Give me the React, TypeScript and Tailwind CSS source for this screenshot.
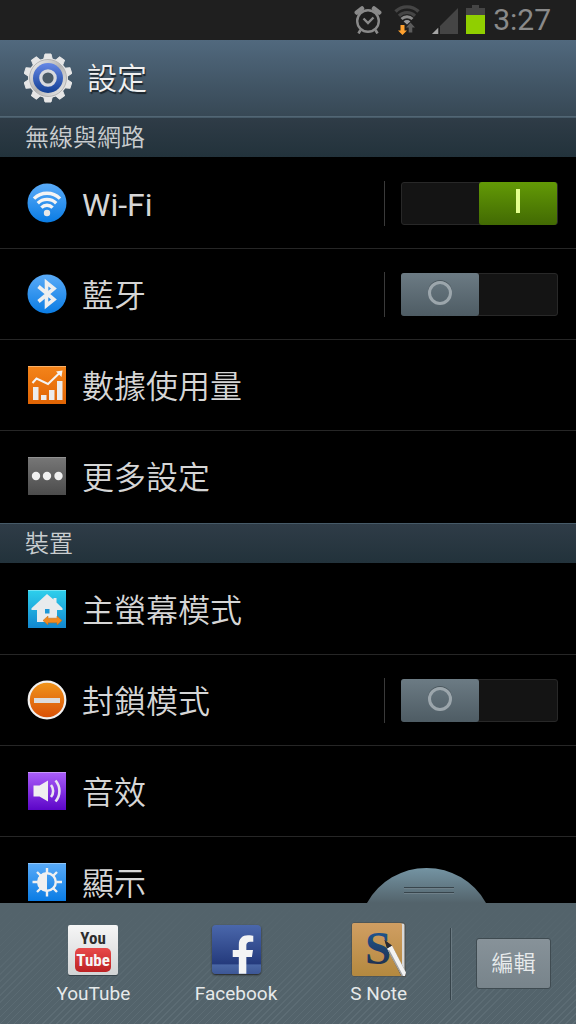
import React, { useState } from 'react';
import clsx from 'clsx';
import { FaFacebookF } from 'react-icons/fa';

const StatusBar: React.FC = () => (
  <div className="flex h-10 flex-shrink-0 items-center justify-end bg-[#1f1f1f] pr-[25px] text-[#8a8a8a]">
    <svg width="28" height="28" viewBox="0 0 28 28" fill="none" stroke="#8a8a8a" aria-hidden="true">
      <circle cx="14" cy="15" r="10.8" strokeWidth="2.4" />
      <path d="M9.5 12.5l4.5 4.5 5.5-5.5" strokeWidth="2.4" />
      <path d="M6.5 24l-2 3.5M21.5 24l2 3.5" strokeWidth="2.6" />
      <path d="M2.8 6.5L8 2.5M25.2 6.5L20 2.5" strokeWidth="4.5" strokeLinecap="round" />
    </svg>
    <svg className="ml-3" width="26" height="30" viewBox="0 0 26 30" fill="none" aria-hidden="true">
      <path d="M1.5 6.5a16.5 16.5 0 0 1 23 0" stroke="#454545" strokeWidth="3.4" />
      <path d="M5 10.8a11.4 11.4 0 0 1 16 0" stroke="#454545" strokeWidth="3.2" />
      <path d="M7.5 14a7.8 7.8 0 0 1 11 0" stroke="#8a8a8a" strokeWidth="2.8" />
      <path d="M9.6 16.4a4.8 4.8 0 0 1 6.8 0L13 19.6z" fill="#9a9a9a" />
      <path d="M16.5 17.5l4.5 5h-2.7v5h-3.6v-5H12z" fill="#5c5c5c" />
      <path d="M6.5 20h4v5.5h2.5L8.5 30 4 25.5h2.5z" fill="#ffa12f" />
    </svg>
    <svg className="ml-3" width="26" height="28" viewBox="0 0 26 28" aria-hidden="true">
      <path d="M0 28L26 2v26z" fill="#454545" />
      <path d="M0 28l6.5-6.5V28z" fill="#a5a5a5" />
      <path d="M6.5 20.5h1.3V28H6.5z" fill="#111" />
    </svg>
    <svg className="ml-2" width="19" height="30" viewBox="0 0 19 30" aria-hidden="true">
      <path d="M6 0h7v3h6v7H0V3h6z" fill="#454545" />
      <rect y="10" width="19" height="19" fill="#90cf00" />
    </svg>
    <span className="ml-2 text-[30px] leading-10 font-normal">3:27</span>
  </div>
);

const teeth = [0, 36, 72, 108, 144, 180, 216, 252, 288, 324];

const GearIcon: React.FC = () => (
  <svg width="48" height="50" viewBox="-24 -25 48 50" aria-hidden="true">
    <defs>
      <linearGradient id="gearMetal" x1="0" y1="0" x2="1" y2="1">
        <stop offset="0" stopColor="#f6f6f6" />
        <stop offset="0.5" stopColor="#b4b4b4" />
        <stop offset="1" stopColor="#f0f0f0" />
      </linearGradient>
      <linearGradient id="gearBlue" x1="0" y1="0" x2="0" y2="1">
        <stop offset="0" stopColor="#6688e6" />
        <stop offset="1" stopColor="#123f94" />
      </linearGradient>
    </defs>
    {teeth.map((deg) => (
      <path
        key={deg}
        d="M-4.5 -18L-3 -24H3L4.5 -18z"
        fill="#e6e6e6"
        stroke="#e6e6e6"
        strokeLinejoin="round"
        transform={`rotate(${deg})`}
      />
    ))}
    <circle r="20" fill="#e6e6e6" />
    <circle r="18.5" fill="url(#gearMetal)" stroke="#a8a8a8" strokeWidth="0.8" />
    <circle r="15" fill="url(#gearBlue)" />
    <circle r="7.2" fill="#4a5a66" stroke="#d8dade" strokeWidth="3.2" />
  </svg>
);

const Gradient: React.FC<{ id: string; from: string; to: string }> = ({ id, from, to }) => (
  <defs>
    <linearGradient id={id} x1="0" y1="0" x2="0" y2="1">
      <stop offset="0" stopColor={from} />
      <stop offset="1" stopColor={to} />
    </linearGradient>
  </defs>
);

const RowIcon: React.FC<{ children: React.ReactNode }> = ({ children }) => (
  <svg className="flex-shrink-0" width="40" height="40" viewBox="0 0 40 40" aria-hidden="true">{children}</svg>
);

const WifiIcon = () => (
  <RowIcon>
    <Gradient id="wifi" from="#5aabf8" to="#0a7ce4" />
    <circle cx="20" cy="20" r="19.5" fill="url(#wifi)" />
    <g fill="none" stroke="#f4f4f4" strokeWidth="3.4">
      <path d="M7 15.6a18.4 18.4 0 0 1 26 0" />
      <path d="M10.8 20.2a13 13 0 0 1 18.4 0" />
      <path d="M14.4 24.6a8 8 0 0 1 11.2 0" />
    </g>
    <circle cx="20" cy="30" r="3.2" fill="#e8e8e8" />
  </RowIcon>
);

const BluetoothIcon = () => (
  <RowIcon>
    <Gradient id="bt" from="#5aabf8" to="#0a7ce4" />
    <circle cx="20" cy="20" r="19.5" fill="url(#bt)" />
    <path d="M11.5 12.5L27 25.5 19.5 31.5V8.5l7.5 6L11.5 27.5" fill="none" stroke="#efefef" strokeWidth="3.6" />
  </RowIcon>
);

const DataIcon = () => (
  <RowIcon>
    <Gradient id="data" from="#f4841a" to="#e06404" />
    <rect x="1" y="1" width="38" height="38" fill="url(#data)" />
    <path d="M1 1.5h38" stroke="#fbb066" />
    <path d="M5.5 18l4-4.5L21 19 33 7.5" fill="none" stroke="#f4f4f4" strokeWidth="2" />
    <path d="M29 6.5l6.5-1L34.5 12z" fill="#f4f4f4" />
    <path d="M6 22h5.5v13H6zM14 30h5.5v5H14zM22 25h5.5v10H22zM30 16h5.5v19H30z" fill="#ececec" />
  </RowIcon>
);

const MoreIcon = () => (
  <RowIcon>
    <Gradient id="more" from="#777777" to="#4c4c4c" />
    <rect x="1" y="1" width="38" height="38" fill="url(#more)" />
    <path d="M1 1.5h38" stroke="#929292" />
    <circle cx="9" cy="20" r="4.2" fill="#f0f0f0" />
    <circle cx="20" cy="20" r="4.2" fill="#f0f0f0" />
    <circle cx="31.5" cy="20" r="4.2" fill="#f0f0f0" />
  </RowIcon>
);

const HomeIcon = () => (
  <RowIcon>
    <Gradient id="home" from="#2ed0ec" to="#1287cf" />
    <rect x="1" y="1" width="38" height="38" fill="url(#home)" />
    <path d="M1 1.5h38" stroke="#6ee2f4" />
    <path d="M20 5l6.500 5.500V9H29.500v4.500l6 5.700V21H30v12H10V21H4.500v-1.800z" fill="#e8ebed" />
    <rect x="18" y="20" width="4.5" height="4.5" fill="#1d98d8" />
    <path d="M16 31.5l5-4.5v2.2h9V27l5 4.5-5 4.5v-2.2h-9V36z" fill="#f18a20" stroke="#c06a14" strokeWidth="0.5" />
  </RowIcon>
);

const BlockIcon = () => (
  <RowIcon>
    <Gradient id="block" from="#f0961c" to="#d94f06" />
    <circle cx="20" cy="20" r="18.3" fill="url(#block)" stroke="#f0f0f0" strokeWidth="2.2" />
    <rect x="7" y="18" width="26" height="5" fill="#dcdcdc" />
  </RowIcon>
);

const SoundIcon = () => (
  <RowIcon>
    <Gradient id="sound" from="#ab5ffa" to="#5c05c8" />
    <rect x="1" y="1" width="38" height="38" fill="url(#sound)" />
    <path d="M1 1.5h38" stroke="#c796fb" />
    <path d="M6.5 14.5h6L21 9.5v21l-8.5-5h-6z" fill="#f0f0f0" />
    <path d="M24 14a9.5 9.5 0 0 1 0 12M28.5 9.5a16 16 0 0 1 0 21" fill="none" stroke="#e8e4f0" strokeWidth="2.6" />
  </RowIcon>
);

const DisplayIcon = () => (
  <RowIcon>
    <Gradient id="display" from="#5aabf8" to="#0a7ce4" />
    <rect x="1" y="1" width="38" height="38" fill="url(#display)" />
    <path d="M1 1.5h38" stroke="#8fc6fa" />
    <g stroke="#f0f0f0" strokeWidth="2.4">
      <path d="M20 6v5M20 29v5.5M5.5 20h5M29.5 20H35M10 10l3.5 3.5M30 10l-3.5 3.5M10 30l3.5-3.5M30 30l-3.5-3.5" />
      <circle cx="20" cy="20" r="8.8" fill="none" />
    </g>
    <path d="M20 10.5a9.5 9.5 0 0 0 0 19z" fill="#f0f0f0" />
  </RowIcon>
);

interface ToggleProps {
  label: string;
  on: boolean;
  onChange: (on: boolean) => void;
}

const Toggle: React.FC<ToggleProps> = ({ label, on, onChange }) => (
  <div className="flex items-center gap-4">
    <span className="h-[45px] w-px bg-[#3a3a3a]" />
    <label className="relative flex h-[43px] w-[157px] cursor-pointer rounded-[3px] border border-[#282828] bg-[#141414]">
      <input
        type="checkbox"
        role="switch"
        aria-label={label}
        checked={on}
        onChange={(e) => onChange(e.target.checked)}
        className="sr-only"
      />
      <span
        className={clsx(
          '-my-px flex w-[78px] items-center justify-center rounded-[3px] bg-linear-to-b',
          on ? 'ml-auto from-[#639a06] to-[#426a03]' : '-ml-px from-[#6c7b84] to-[#4e5c64]'
        )}
      >
        {on ? (
          <span className="mb-1 h-6 w-1 bg-[#e4ff8e]" />
        ) : (
          <span className="mb-0.5 size-6 rounded-full border-[3px] border-[#9ca6ac] shadow-[0_-1px_0_#4c585f]" />
        )}
      </span>
    </label>
  </div>
);

interface Setting {
  id: string;
  label: string;
  icon: React.FC;
  toggle?: boolean;
  latin?: boolean;
}

const network: Setting[] = [
  { id: 'wifi', label: 'Wi-Fi', icon: WifiIcon, toggle: true, latin: true },
  { id: 'bluetooth', label: '藍牙', icon: BluetoothIcon, toggle: true },
  { id: 'data', label: '數據使用量', icon: DataIcon },
  { id: 'more', label: '更多設定', icon: MoreIcon },
];

const device: Setting[] = [
  { id: 'home', label: '主螢幕模式', icon: HomeIcon },
  { id: 'blocking', label: '封鎖模式', icon: BlockIcon, toggle: true },
  { id: 'sound', label: '音效', icon: SoundIcon },
  { id: 'display', label: '顯示', icon: DisplayIcon },
];

interface SectionProps {
  title: string;
  items: Setting[];
  enabled: Record<string, boolean>;
  onToggle: (id: string, on: boolean) => void;
}

const Section: React.FC<SectionProps> = ({ title, items, enabled, onToggle }) => (
  <section>
    <h2 className="h-10 border-t border-[#465a68] bg-linear-to-b from-[#2f3c47] to-[#22323b] px-[25px] text-2xl leading-10 font-[350] text-[#c9cdcf]">
      {title}
    </h2>
    <ul className="py-px">
      {items.map(({ id, label, icon: Icon, toggle, latin }) => (
        <li
          key={id}
          className="flex h-[91px] items-center border-b border-[#262626] pr-[18px] pl-[27px] last:border-transparent"
        >
          <button type="button" className="flex flex-1 items-center gap-[15px] text-left text-[32px] leading-10">
            <Icon />
            <span className={clsx('pt-1', latin ? 'font-normal' : 'font-[350]')}>{label}</span>
          </button>
          {toggle && <Toggle label={label} on={enabled[id]} onChange={(on) => onToggle(id, on)} />}
        </li>
      ))}
    </ul>
  </section>
);

const YouTubeLogo = () => (
  <svg width="52" height="52" viewBox="0 0 52 52" aria-hidden="true">
    <Gradient id="ytPaper" from="#f6f6f6" to="#d2d4d5" />
    <Gradient id="ytRed" from="#e84a4a" to="#bd2224" />
    <rect x="1" y="2" width="50" height="50" rx="2" fill="#37444b" />
    <rect x="1" y="1" width="50" height="50" rx="2" fill="url(#ytPaper)" />
    <rect x="8" y="24" width="36" height="24" rx="5" fill="url(#ytRed)" />
    <g textAnchor="middle" fontWeight="700" className="font-['Roboto_Condensed','Liberation_Sans_Narrow',Roboto,sans-serif]">
      <text x="26" y="20" fontSize="17" fill="#2e2e2e">You</text>
      <text x="26" y="42" fontSize="17" fill="#f6f6f6">Tube</text>
    </g>
  </svg>
);

const FacebookLogo = () => (
  <span className="flex h-[49px] w-[49px] items-end justify-end overflow-hidden rounded-[4px] bg-[linear-gradient(#4a67ab,#243a7c_80%,#4a67a5_81%,#3d5796)] pr-1.5 shadow-[0_1px_2px_#222]">
    <FaFacebookF className="h-[39px] w-6 text-[#f4f4f4]" />
  </span>
);

const NoteLogo = () => (
  <svg width="56" height="56" viewBox="0 0 56 56" aria-hidden="true">
    <Gradient id="noteCover" from="#d09e62" to="#b4893f" />
    <Gradient id="noteInk" from="#1d5fa0" to="#20283f" />
    <rect x="1" y="1" width="53" height="53" rx="2" fill="#d9d9d9" stroke="#4a4a44" />
    <rect x="1" y="1" width="50" height="53" rx="2" fill="url(#noteCover)" />
    <text x="27" y="42" fontSize="47" fontWeight="700" textAnchor="middle" fill="url(#noteInk)" className="font-['Liberation_Serif',serif]">
      S
    </text>
    <path d="M33.5 18l3 9 14 27.500h4.500v-4L41 24z" fill="#4a4640" />
    <path d="M36 26.500l5-3L55 50.500l-1 3.500h-3z" fill="#f2f2f2" />
    <path d="M37.500 28l14 26" stroke="#a0a0a0" strokeWidth="1.5" />
    <path d="M33.5 18l2.500 8.500 5-3z" fill="#2a2c33" />
  </svg>
);

const apps = [
  { name: 'YouTube', logo: YouTubeLogo },
  { name: 'Facebook', logo: FacebookLogo },
  { name: 'S Note', logo: NoteLogo },
];

const Tray: React.FC = () => (
  <footer className="relative flex h-[121px] flex-shrink-0 items-center bg-[#53636b] bg-[linear-gradient(#53636b,transparent),repeating-linear-gradient(135deg,#5d6d75_0_1px,transparent_1px_5px)] pr-[25px] pl-[22px]">
    {/* pull handle, overlaps the list */}
    <svg className="absolute right-[89px] bottom-full" width="121" height="36" viewBox="0 0 121 36" aria-hidden="true">
      <Gradient id="handle" from="#7494a3" to="#53636b" />
      <path d="M1 36A68 68 0 0 1 120 36z" fill="url(#handle)" />
      <path d="M38 20.5h50M38 25.5h50" stroke="#38454c" />
      <path d="M38 21.5h50M38 26.5h50" stroke="#6f8089" />
    </svg>
    <ul className="flex flex-1">
      {apps.map(({ name, logo: Logo }) => (
        <li key={name} className="flex-1">
          <button type="button" className="flex w-full flex-col items-center gap-1 text-[19px] leading-6 text-[#e6e9ea]">
            <span className="flex h-14 items-center">
              <Logo />
            </span>
            {name}
          </button>
        </li>
      ))}
    </ul>
    <span className="h-[72px] w-0.5 border-r border-[#6b7a82] bg-[#36434a]" />
    <button
      type="button"
      className="ml-6 h-[51px] w-[75px] rounded-[3px] border border-[#3f4b51] bg-linear-to-b from-[#879299] to-[#78848b] text-[22px] font-[350] text-[#e8ebec]"
    >
      編輯
    </button>
  </footer>
);

export default function App() {
  const [enabled, setEnabled] = useState<Record<string, boolean>>({
    wifi: true,
    bluetooth: false,
    blocking: false,
  });

  const handleToggle = (id: string, on: boolean) => {
    setEnabled((prev) => ({ ...prev, [id]: on }));
  };

  return (
    <div className="flex h-screen flex-col bg-black font-[Roboto,'Noto_Sans_CJK_TC',sans-serif] text-[#d6d6d6]">
      <StatusBar />
      <header className="flex h-[77px] flex-shrink-0 items-center gap-[15px] border-b border-[#526674] bg-linear-to-b from-[#51697e] to-[#374855] px-6">
        <GearIcon />
        <h1 className="pt-0.5 text-[30px] leading-10 font-[350] text-[#f0f0f0] [text-shadow:1px_2px_1px_#1c252c]">設定</h1>
      </header>
      <main className="min-h-0 flex-1 overflow-hidden">
        <Section title="無線與網路" items={network} enabled={enabled} onToggle={handleToggle} />
        <Section title="裝置" items={device} enabled={enabled} onToggle={handleToggle} />
      </main>
      <Tray />
    </div>
  );
}
